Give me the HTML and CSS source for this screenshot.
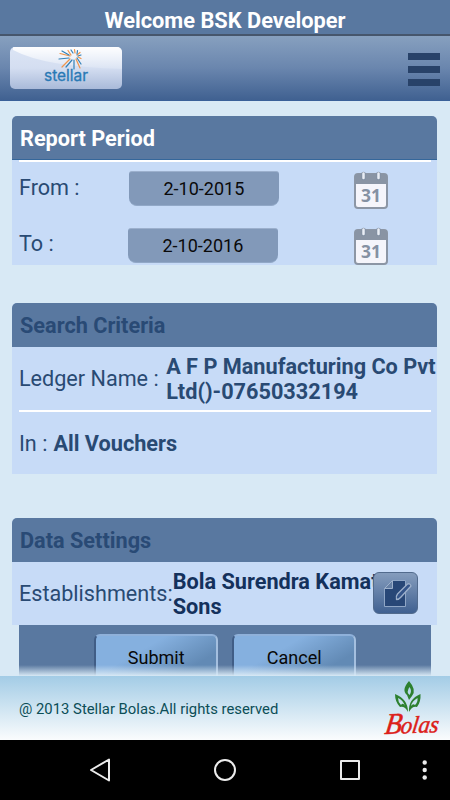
FILE: index.html
```html
<!DOCTYPE html>
<html lang="en">
<head>
<meta charset="utf-8">
<title>Stellar</title>
<link rel="stylesheet" href="styles.css">
</head>
<body>
<div class="title">Welcome BSK Developer</div>
<header class="toolbar">
  <div class="brand">
    <svg class="brand-art" width="112" height="42" viewBox="0 0 112 42">
      <defs><linearGradient id="shine" x2="0" y2="1"><stop stop-color="#ffffff" stop-opacity=".95"/><stop offset="1" stop-color="#ffffff" stop-opacity=".15"/></linearGradient></defs>
      <path d="M3 3Q35 20 112 22V0H3Z" fill="url(#shine)"/>
      <g stroke-linecap="round" stroke-width="1.200" fill="none">
        <g stroke="#ef944b"><path d="M60 9L50 6.500M60 12L52 20M61 8L58 3.500M65 6L64.500 2.500M67 8L70 5.500M66 12L70 21M68 10L71 11.500"/></g>
        <g stroke="#3381b8"><path d="M59 8L52 4M59 11L49 12M63 6L61 3M64 13L64 22M62 13L56 20M67 7L67.500 3.500M67 11L71 17M68 9L71 8"/></g>
      </g>
      <text x="34" y="34" class="brand-text" textLength="44" lengthAdjust="spacingAndGlyphs">stellar</text>
    </svg>
  </div>
  <div class="menu"><span></span><span></span><span></span></div>
</header>
<main class="content">
  <section class="card">
    <h2 class="card-head lit">Report Period</h2>
    <div class="rule"></div>
    <div class="date-row">
      <span class="label">From :</span><span class="date">2-10-2015</span>
      <svg class="cal" width="36" height="40" viewBox="0 0 36 40"><rect x="2" y="4" width="32" height="34" rx="3" fill="#f5f5fb" stroke="#8c96a5" stroke-width="2"/><path d="M2 14V7Q2 4 5 4H31Q34 4 34 7V14Z" fill="#8994a4"/><path d="M10.500 4V8M25.500 4V8" stroke="#8290a3" stroke-width="4.500" stroke-linecap="round"/><path d="M10.500 3.500V8M25.500 3.500V8" stroke="#e9edf5" stroke-width="2.500" stroke-linecap="round"/><text x="18" y="32" text-anchor="middle" class="cal-num" textLength="20" lengthAdjust="spacingAndGlyphs">31</text></svg>
    </div>
    <div class="date-row second">
      <span class="label">To :</span><span class="date">2-10-2016</span>
      <svg class="cal" width="36" height="40" viewBox="0 0 36 40"><rect x="2" y="4" width="32" height="34" rx="3" fill="#f5f5fb" stroke="#8c96a5" stroke-width="2"/><path d="M2 14V7Q2 4 5 4H31Q34 4 34 7V14Z" fill="#8994a4"/><path d="M10.500 4V8M25.500 4V8" stroke="#8290a3" stroke-width="4.500" stroke-linecap="round"/><path d="M10.500 3.500V8M25.500 3.500V8" stroke="#e9edf5" stroke-width="2.500" stroke-linecap="round"/><text x="18" y="32" text-anchor="middle" class="cal-num" textLength="20" lengthAdjust="spacingAndGlyphs">31</text></svg>
    </div>
  </section>
  <section class="card">
    <h2 class="card-head">Search Criteria</h2>
    <div class="row"><span class="label">Ledger Name :</span><b class="value ledger">A F P Manufacturing Co Pvt<br>Ltd()-07650332194</b></div>
    <div class="rule"></div>
    <div class="row short"><span class="label">In :</span><b class="value vouchers">All Vouchers</b></div>
  </section>
  <section class="card">
    <h2 class="card-head">Data Settings</h2>
    <div class="row dark"><span class="label est">Establishments:</span><b class="value">Bola Surendra Kamath<br>Sons</b>
      <div class="edit"><svg width="45" height="42" viewBox="0 0 45 42"><path d="M11.500 16.500L19.500 8.500H32.500V34.500H11.500Z" fill="#284777" stroke="#8fa6c6"/><path d="M11.500 16.500H19.500V8.500Z" fill="#6680a5" stroke="#9db0cb"/><path d="M23.500 27.500Q22.500 24.500 24.500 22L34.500 12Q37 11 38 14L28 25Q26 27.500 23.500 27.500Z" fill="#35558a" stroke="#9db0cb" stroke-width="1.300" stroke-linejoin="round"/></svg></div>
    </div>
  </section>
  <div class="actions"><div class="btn">Submit</div><div class="btn">Cancel</div></div>
  <div class="fade"></div>
</main>
<footer class="footer">
  <span>@ 2013 Stellar Bolas.All rights reserved</span>
  <svg class="bolas" width="60" height="60" viewBox="0 0 60 60">
    <g fill="#2d802f" fill-rule="evenodd"><path d="M27 1Q35 10 30 16L27 20L25 15Q19 10 27 1ZM27.500 7Q24 12 27.500 15Q30.500 11 27.500 7Z"/><path d="M13 14Q26 19 26 32Q23 26 18 27Q13 22 13 14ZM16 18Q16 22 19 25Q21 22 23 26Q21 20 16 18Z"/><path d="M38.500 14Q26 19 27 32Q30 26 35 27Q39 22 38.500 14ZM35.500 18Q36 22 33 25Q31 23 29 26Q30 21 35.500 18Z"/></g>
    <g transform="translate(2 54) rotate(-2) skewX(-10)" class="bolas-text"><text x="0" y="0" class="initial" textLength="17" lengthAdjust="spacingAndGlyphs">B</text><text x="16" y="0" textLength="38" lengthAdjust="spacingAndGlyphs">olas</text></g>
  </svg>
</footer>
<nav class="nav">
  <svg width="450" height="60" viewBox="0 0 450 60" fill="none" stroke="#ececec" stroke-width="2" stroke-linejoin="round"><path d="M109 19.500V40.500L91 30Z"/><circle cx="225" cy="30" r="10"/><rect x="341" y="21" width="18" height="18"/><g fill="#ececec" stroke="none"><circle cx="424.700" cy="22.500" r="2.200"/><circle cx="424.700" cy="30" r="2.200"/><circle cx="424.700" cy="37.500" r="2.200"/></g></svg>
</nav>
</body>
</html>
```

FILE: styles.css
```css
* { box-sizing: border-box; }
body {
  margin: 0;
  width: 450px;
  height: 800px;
  overflow: hidden;
  display: flex;
  flex-direction: column;
  font-family: Roboto, "Liberation Sans", sans-serif;
  background: #d8e9f5;
}
.title {
  height: 36px;
  flex: none;
  background: #5978a0;
  border-bottom: 2px solid #46566c;
  color: #fff;
  font-weight: 700;
  font-size: 21.800px;
  line-height: 41px;
  text-align: center;
}
.toolbar {
  height: 65px;
  flex: none;
  display: flex;
  justify-content: space-between;
  padding: 11px 10px 0;
  background: linear-gradient(#87a0bf, #6a86ae 50%, #406191);
  border-bottom: 1px solid #3a6099;
}
.brand {
  width: 112px;
  height: 42px;
  border-radius: 5px;
  overflow: hidden;
  background: linear-gradient(#dce5f5, #d4def1 50%, #a9bad9);
}
.brand-art { display: block; }
.brand-text { font: 15.500px Inter, sans-serif; fill: #2979b5; stroke: #2979b5; stroke-width: .3; }
.menu { display: flex; flex-direction: column; gap: 6px; padding-top: 6px; }
.menu span { width: 32px; height: 7px; background: #284269; }
.content {
  position: relative;
  height: 575px;
  flex: none;
  overflow: hidden;
  padding: 15px 13px 0 12.400px;
}
.card { background: #c7dbf7; margin-bottom: 38px; border-radius: 5px 5px 0 0; }
.card-head {
  margin: 0;
  height: 44px;
  padding-left: 7.600px;
  border-radius: 5px 5px 0 0;
  background: #5978a0;
  color: #294a75;
  font-size: 21.700px;
  line-height: 46px;
}
.card-head.lit { color: #fff; border-bottom: 1px solid #35679b; }
.rule { height: 2px; background: #fff; margin: 0 6.500px; }
.label { color: #294a73; font-size: 21.600px; white-space: nowrap; flex: none; }
.date-row { height: 57px; display: flex; align-items: flex-start; padding: 9px 0 0 6.600px; }
.date-row.second { height: 46px; padding-top: 8px; }
.date-row .label { width: 109.900px; line-height: 33px; }
.date-row.second .label { line-height: 34px; }
.date {
  width: 150px;
  height: 35px;
  border-radius: 3px 3px 8px 8px;
  background: #8299b9;
  border-top: 1px solid #9cb0cd;
  border-bottom: 1px solid #91a8c7;
  color: #0a0a0a;
  font-size: 18px;
  line-height: 34px;
  text-align: center;
}
.second .date { margin-top: 1px; margin-left: -1px; margin-right: 1px; line-height: 33px; }
.cal { margin: -1px 0 0 74px; flex: none; }
.cal-num { font: bold 18px "Open Sans", sans-serif; fill: #8591a3; }
.row { position: relative; height: 63px; display: flex; align-items: center; padding-left: 6.600px; }
.row.short { height: 62px; }
.value { color: #294a73; font-size: 21.700px; line-height: 25px; white-space: nowrap; padding-top: 1px; }
.dark .value { color: #14315c; }
.ledger { margin-left: 7.500px; }
.vouchers { margin-left: 6px; padding-top: 0; }
.edit {
  position: absolute;
  left: 360.600px;
  top: 10px;
  width: 45px;
  height: 42px;
  border-radius: 6px;
  border: 1px solid #526b8d;
  background: linear-gradient(#859dbd, #406191);
}
.edit svg { display: block; margin: -1px; }
.card:nth-of-type(2) { margin-bottom: 44px; }
.card:nth-of-type(3) { margin-bottom: 0; }
.actions {
  margin: 0 6.500px;
  height: 60px;
  padding: 9px 0 0 1px;
  display: flex;
  justify-content: center;
  gap: 14px;
  background: #5978a0;
}
.btn {
  width: 124px;
  height: 50px;
  border-radius: 6px;
  border: 2px solid #8fb1da;
  border-left-color: #405d86;
  border-right-color: #a4bfdf;
  background: linear-gradient(150deg, #85b0df 35%, #628ab5 75%);
  color: #080808;
  font-size: 18px;
  line-height: 43px;
  text-align: center;
}
.fade {
  position: absolute;
  left: 0;
  right: 0;
  bottom: 0;
  height: 11px;
  background: linear-gradient(rgba(216, 233, 245, 0), #d8e9f5);
}
.footer {
  height: 64px;
  flex: none;
  display: flex;
  justify-content: space-between;
  padding: 4px 8px 0 19px;
  background: linear-gradient(#a3cce6, #fafcfd);
  color: #0c4e57;
  font-size: 14.850px;
  line-height: 58px;
}
.bolas { flex: none; overflow: visible; }
.bolas-text { font: italic 24px "Liberation Serif", serif; fill: #dc2018; stroke: #dc2018; stroke-width: .5; }
.initial { font-size: 30px; }
.nav { height: 60px; flex: none; background: #000; }
.nav svg { display: block; }
```
